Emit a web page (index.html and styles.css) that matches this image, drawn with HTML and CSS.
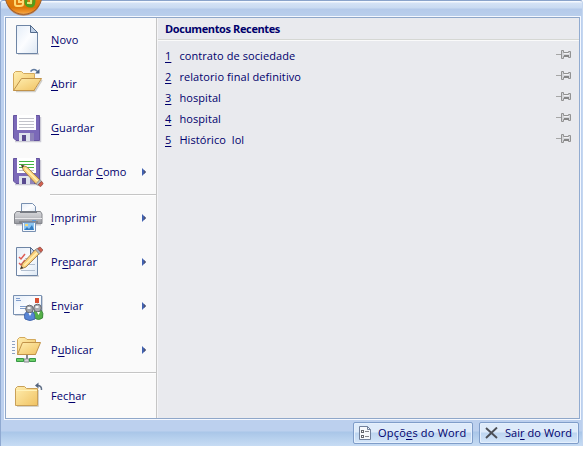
FILE: index.html
```html
<!DOCTYPE html>
<html lang="pt">
<head>
<meta charset="utf-8">
<title>Menu do Word</title>
<link rel="stylesheet" href="styles.css">
</head>
<body>
<svg class="defs" width="0" height="0" aria-hidden="true">
  <defs>
    <linearGradient id="paper" x1="0" y1="0" x2="1" y2="1"><stop offset="0" stop-color="#e4edf8"/><stop offset=".5" stop-color="#fcfdff"/><stop offset="1" stop-color="#dce7f3"/></linearGradient>
    <linearGradient id="gold" x1="0" y1="0" x2="1" y2="1"><stop offset="0" stop-color="#ffeeb0"/><stop offset="1" stop-color="#f0c262"/></linearGradient>
    <linearGradient id="metal" x1="0" y1="0" x2="0" y2="1"><stop offset="0" stop-color="#d6d7da"/><stop offset=".4" stop-color="#c4c5c9"/><stop offset="1" stop-color="#94969d"/></linearGradient>
    <linearGradient id="orb" gradientUnits="userSpaceOnUse" x1="0" y1="0" x2="0" y2="15"><stop offset="0" stop-color="#e07c0e"/><stop offset=".5" stop-color="#dd7508"/><stop offset=".8" stop-color="#f0962e"/><stop offset="1" stop-color="#f7bd6c"/></linearGradient>
    <symbol id="sheet" viewBox="0 0 32 32"><path d="M7 31H28" stroke="#d5d7dc" stroke-width="2"/><path d="M5.500 2.500H19.500L26.500 9.500V30.500H5.500Z" fill="url(#paper)" stroke="#6e85a5"/><path d="M19.500 2.500V9.500H26.500Z" fill="#bfd0e6" stroke="#536b8d"/></symbol>
    <symbol id="floppy" viewBox="0 0 32 32"><path d="M4 29.500H29.500V5" fill="none" stroke="#cccbd5" stroke-width="1.500"/><path d="M2.500 3.500H28.500V28.500H5L2.500 26Z" fill="#7b69b8" stroke="#65549f"/><path d="M6 3H25V18H6Z" fill="#fff"/><path d="M8 6.500H23M8 9.500H23M8 12.500H23M8 15.500H23" stroke="#c2c3ca"/><path d="M8 21H23V29H8Z" fill="#dfe3ed"/><path d="M19 21H23V29H19Z" fill="#8e83b9"/><path d="M11 23H15V29H11Z" fill="#594a8f"/></symbol>
    <symbol id="pencil" viewBox="0 0 20 20"><path d="M.8 .8L5.500 2.500L17 14L13.700 17.500L2.500 5.500Z" fill="#fbd17c" stroke="#94703f" stroke-width=".7"/><path d="M4 3.800L15 14.800" stroke="#fff0b1" stroke-width="1.400"/><path d="M.8 .8L3.200 1.600L1.700 3.400Z" fill="#333"/><path d="M13.500 17.200L16.800 13.500L18.300 15L15 18.500Z" fill="#b9bbbf" stroke="#777" stroke-width=".5"/><path d="M15.300 18.200L18.300 15L20 17L17.500 19.700Z" fill="#d0604f" stroke="#79433c" stroke-width=".5"/></symbol>
    <symbol id="arrow" viewBox="0 0 4 8"><path d="M0 0L4 4L0 8Z" fill="#4161b0"/><path d="M2 2L4 4L2 6Z" fill="#52546e"/></symbol>
    <symbol id="pin" viewBox="0 0 16 10"><path d="M0 4.500H5" stroke="#a6a6a6"/><path d="M5.500 .5H7.500V2.500H12.500V1.500H14.500V7.500H12.500V6.500H7.500V8.500H5.500Z" fill="#d5d6da" stroke="#929292"/><path d="M8 3.500H13" stroke="#f1f1f3"/><path d="M8 6H13" stroke="#858585" stroke-width="2"/></symbol>
  </defs>
</svg>

<div class="window">
  <svg class="orb" width="40" height="16" viewBox="0 0 40 16"><circle cx="20.500" cy="-4" r="18.300" fill="url(#orb)" stroke="#9a6238"/><path d="M5 5.500A17.500 17.500 0 0 0 36 5.500" fill="none" stroke="#b5560a" stroke-width="1.500" opacity=".6"/><path d="M12 0V4Q12 6 14 6H17Q20 6 20 4V0M16 0V2H19" fill="none" stroke="#ffd873" stroke-width="2"/><path d="M23 0V3Q24 6 27 6H29Q31 5 31 0" fill="none" stroke="#4f9f1c" stroke-width="3"/><path d="M24 3H28V0" fill="none" stroke="#e0e873" stroke-width="2"/></svg>

  <main class="panel">
    <nav class="menu">
      <a class="item"><svg class="icon"><use href="#sheet" y="-1"/></svg><span class="label"><u>N</u>ovo</span></a>
      <a class="item"><svg class="icon" viewBox="0 0 32 32"><path d="M5 23.500H24L31 12" fill="none" stroke="#cfcdc8" stroke-width="1.500"/><path d="M2.500 22.500V5.500L4.500 3.500H10.500L12.500 5.500H23.500V22.500Z" fill="url(#gold)" stroke="#d3a95c"/><path d="M2.500 22.500L10.500 10.500H30.500L23 22.500Z" fill="url(#gold)" stroke="#c1934a"/><path d="M19.500 3.500Q23 -.5 26.500 3.500" fill="none" stroke="#627ca0" stroke-width="1.500"/><path d="M28.500 1V5.500H24Z" fill="#4b6384"/></svg><span class="label"><u>A</u>brir</span></a>
      <a class="item"><svg class="icon"><use href="#floppy"/></svg><span class="label"><u>G</u>uardar</span></a>
      <a class="item"><svg class="icon" viewBox="0 0 32 32"><use href="#floppy" width="32" height="32" y="-1"/><path d="M8 5.500H23M8 8.500H23M8 11.500H23" stroke="#43b443"/><use href="#pencil" x="9.500" y="8" width="23" height="23"/></svg><span class="label as">Guardar <u>C</u>omo</span><svg class="more"><use href="#arrow"/></svg></a>
      <hr class="rule">
      <a class="item"><svg class="icon" viewBox="0 0 32 32"><path d="M5 22.500H30" stroke="#cacbd0" stroke-width="2"/><path d="M10.500 11V1.500H21.500L24.500 4.500V11" fill="url(#paper)" stroke="#7890b1"/><path d="M5.500 9.500H29.500L31 12V21.500H3.500V12Z" fill="url(#metal)" stroke="#85878d"/><path d="M9 9H26V11H9Z" fill="#777b83"/><path d="M4 16.500H31" stroke="#e8e8ea"/><path d="M21 18.500H25" stroke="#5a9de0"/><path d="M8 20H27" stroke="#666a71"/><path d="M11.500 20.500H24.500V29.500H11.500Z" fill="#f4f8fd" stroke="#7890b1"/><path d="M13 21H23V28H13Z" fill="#8cc6f2"/><path d="M13 28L16 25L18 27L21 23L23 28Z" fill="#337cc2"/><path d="M14 22H17V24H14Z" fill="#f1d77d"/></svg><span class="label"><u>I</u>mprimir</span><svg class="more"><use href="#arrow"/></svg></a>
      <a class="item"><svg class="icon" viewBox="0 0 32 32"><use href="#sheet" width="32" height="32" y="-1"/><path d="M8 11L10 13L14 8M8 17L10 19L14 14" fill="none" stroke="#dd5c55" stroke-width="1.500"/><path d="M14 12.500H22M15 18.500H24M10 24.500H24" stroke="#b2bfd0"/><g transform="translate(8.500 24) scale(1 -1)"><use href="#pencil" width="23.500" height="23.500"/></g></svg><span class="label">Pr<u>e</u>parar</span><svg class="more"><use href="#arrow"/></svg></a>
      <a class="item"><svg class="icon" viewBox="0 0 32 32"><path d="M4 25.500H31.500V6" fill="none" stroke="#ccd0d8"/><path d="M2.500 5.500H30.500V24.500H2.500Z" fill="url(#paper)" stroke="#7890b1"/><path d="M5 8.500H9M5 10.500H10M9 16.500H18M9 18.500H16" stroke="#7f9dcc"/><path d="M24 8H28V13H24Z" fill="#da5033"/><path d="M23 28Q21 22 25 20H30Q33 23 31.500 28Q28 31 23 28Z" fill="#55b048" stroke="#3d8b3d"/><path d="M14 29Q12 23 17 21H21Q24 23 24 29Q19 32 14 29Z" fill="#5785d5" stroke="#4668ac"/><circle cx="18.500" cy="19" r="3.800" fill="#a0a2a7" stroke="#686a70"/><circle cx="26.500" cy="18" r="3.800" fill="#aaacb1" stroke="#686a70"/><path d="M16.500 18H19.500M24.500 17H27.500" stroke="#f4f4f4" stroke-width="2"/><path d="M17.500 23L19 26L20.500 23M26 22L27.500 25L29 22" fill="#fff"/></svg><span class="label">En<u>v</u>iar</span><svg class="more"><use href="#arrow"/></svg></a>
      <a class="item"><svg class="icon" viewBox="0 0 32 32"><path d="M1 7.500H4M1 10.500H4M1 13.500H4M1 16.500H4M1 19.500H4" stroke="#8fa2c1"/><path d="M6.500 20.500V5.500L8.500 3.500H14L16 5.500H24.500V20.500Z" fill="url(#gold)" stroke="#d3a95c"/><path d="M6.500 20.500L11.500 8.500H29.500L24.500 20.500Z" fill="url(#gold)" stroke="#c1934a"/><path d="M15.500 21V25H13V28H18V25H16.500V21" fill="#d5d7da" stroke="#85898d"/><path d="M5.500 24.500H12.500V27.500H5.500ZM18.500 24.500H24.500V27.500H18.500Z" fill="#69cf66" stroke="#399747"/></svg><span class="label">P<u>u</u>blicar</span><svg class="more"><use href="#arrow"/></svg></a>
      <hr class="rule">
      <a class="item"><svg class="icon" viewBox="0 0 32 32"><path d="M6 26.500H27.500V10" fill="none" stroke="#d4d1c9"/><path d="M4.500 25.500V8.500L6.500 6.500H13.500L15.500 8.500H26.500V25.500Z" fill="url(#gold)" stroke="#c9a058"/><path d="M5 10.500H26" stroke="#fff2b9"/><path d="M26 5.500Q31 5.500 30.500 10" fill="none" stroke="#627188" stroke-width="1.500"/><path d="M27.500 2.500V8.500L24 5.500Z" fill="#53637c"/></svg><span class="label">Fec<u>h</u>ar</span></a>
    </nav>

    <section class="recent">
      <h1 class="heading">Documentos Recentes</h1>
      <ol class="docs">
        <li class="doc"><u class="num">1</u><span class="name">contrato de sociedade</span><svg class="pin"><use href="#pin"/></svg></li>
        <li class="doc"><u class="num">2</u><span class="name">relatorio final definitivo</span><svg class="pin"><use href="#pin"/></svg></li>
        <li class="doc"><u class="num">3</u><span class="name">hospital</span><svg class="pin"><use href="#pin"/></svg></li>
        <li class="doc"><u class="num">4</u><span class="name">hospital</span><svg class="pin"><use href="#pin"/></svg></li>
        <li class="doc"><u class="num">5</u><span class="name">Histórico&nbsp; lol</span><svg class="pin"><use href="#pin"/></svg></li>
      </ol>
    </section>
  </main>

  <footer class="footer">
    <button class="button options"><svg width="12" height="14" viewBox="0 0 12 14"><path d="M.5 .5H8.500L11.500 3.500V13.500H.5Z" fill="#f7f9fc" stroke="#71809b"/><path d="M8.500 .5V3.500H11.500" fill="none" stroke="#71809b"/><path d="M2 4H5V7H2ZM2 9H5V12H2Z" fill="#65676e"/><path d="M6 5.500H10M6 10.500H10" stroke="#85878e"/><path d="M3 5H4V6H3ZM3 10H4V11H3Z" fill="#fff"/></svg><span>Opçõ<u>e</u>s do Word</span></button>
    <button class="button exit"><svg width="13" height="12" viewBox="0 0 13 12"><path d="M1 1L12 11M12 .5L1 11" stroke="#4c4f56" stroke-width="1.900"/></svg><span>Sai<u>r</u> do Word</span></button>
  </footer>
</div>
</body>
</html>
```
FILE: styles.css
```css
* { box-sizing: border-box; }

body {
  margin: 0;
  background: #fff;
  color: #00006c;
  font: 11px/14px "Open Sans", "Noto Sans", sans-serif;
}

.defs { position: absolute; }

.window {
  position: relative;
  width: 583px;
  height: 446px;
  padding: 16px 3px 0 4px;
  border-top: 1px solid #8aa3ca;
  border-left: 1px solid #8fa9d1;
  border-right: 1px solid #c5d7f0;
  border-radius: 3px 3px 0 0;
  background: linear-gradient(#f5f9ff 0 1px, #d4e2f5 2px, #c9daf1 7px, #b5caea 8px, #b9cfec 15px, #bcd0ee 16px 430px, #a9c6e8 431px, #c7dcf4 445px);
}

.orb {
  position: absolute;
  top: -1px;
  left: 2px;
}

.panel {
  display: flex;
  width: 575px;
  height: 402px;
  border: 1px solid #8fa7c9;
  border-right-color: #91abd0;
  box-shadow: 0 0 0 1px #f4f8ff;
}

.menu {
  width: 151px;
  flex: none;
  background: #fafafa;
  border-right: 1px solid #c5c5c5;
}

.item {
  display: flex;
  align-items: center;
  height: 44px;
  padding-left: 5px;
}

.icon { width: 32px; height: 32px; flex: none; overflow: visible; }
.label { flex: 1; margin-left: 8px; white-space: nowrap; letter-spacing: 0.1px; }
.as { letter-spacing: -0.06px; }
.more { width: 4px; height: 8px; margin-right: 10px; }

.rule {
  height: 2px;
  margin: 0 0 0 44px;
  border: 0;
  border-top: 1px solid #c5c5c5;
  background: #fff;
}

.recent {
  flex: 1;
  background: #e9eaee;
  border-left: 1px solid #f5f5f7;
}

.heading {
  height: 23px;
  margin: 0;
  padding: 4px 0 0 7px;
  border-bottom: 1px solid #fafafa;
  box-shadow: inset 0 -1px #d5d7d3;
  font-size: 11px;
  line-height: 14px;
  letter-spacing: -0.38px;
}

.docs { margin: 0; padding: 4px 7px 0 7px; list-style: none; }
.doc { display: flex; align-items: center; height: 21px; letter-spacing: 0.08px; }
.num { width: 7px; }
.name { flex: 1; margin-left: 7.4px; }
.pin { width: 16px; height: 10px; margin-top: -1px; }

u { text-underline-offset: 2px; text-decoration-thickness: 1px; text-decoration-skip-ink: none; }

.footer {
  display: flex;
  justify-content: flex-end;
  gap: 6px;
  padding-top: 3px;
}

.button {
  display: flex;
  align-items: center;
  height: 22px;
  padding: 0 0 0 5px;
  border: 1px solid #7f9dc9;
  border-radius: 2px;
  background: linear-gradient(#deebfa 0 9px, #bdd5f0 10px, #d6e7fa);
  box-shadow: inset 0 0 0 1px #e5f0fd;
  color: inherit;
  font: inherit;
  letter-spacing: 0.2px;
  white-space: nowrap;
}

.options { width: 120px; gap: 7px; }
.exit { width: 100px; gap: 7px; letter-spacing: 0.05px; }
```
